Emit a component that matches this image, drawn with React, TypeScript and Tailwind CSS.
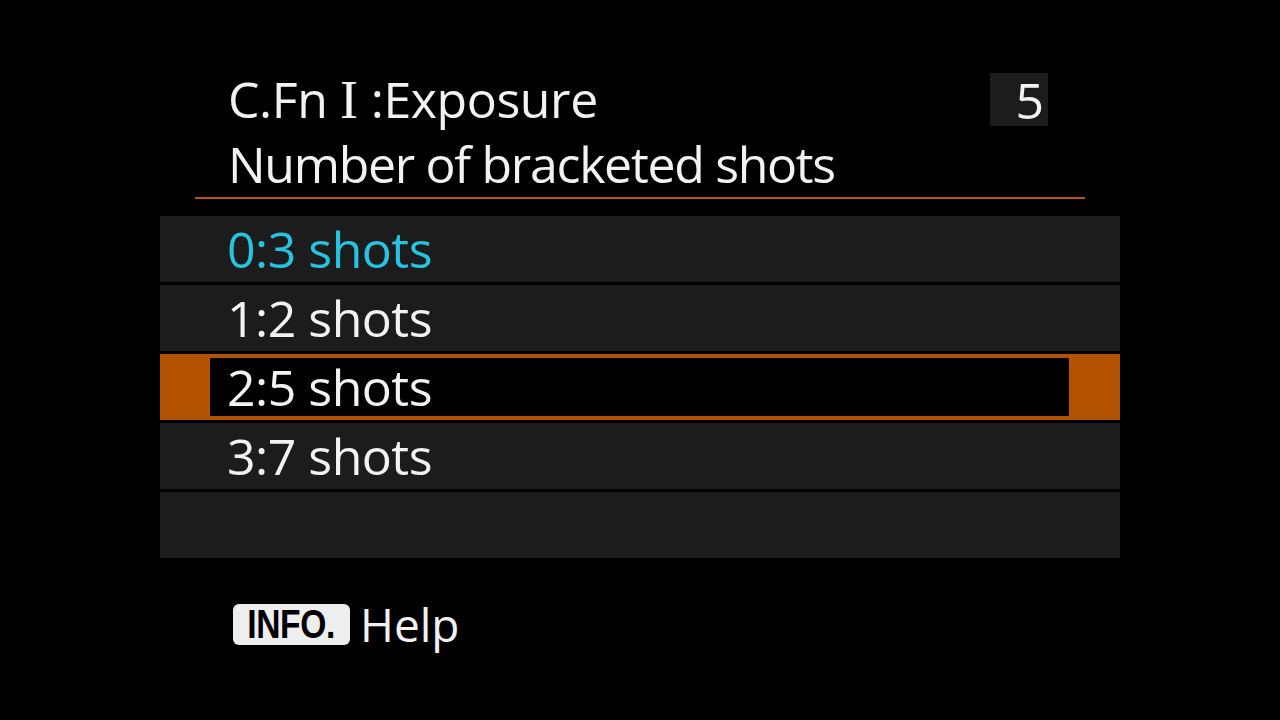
import React from 'react';

const options = [
  { label: '0:3 shots', current: true },
  { label: '1:2 shots' },
  { label: '2:5 shots', selected: true },
  { label: '3:7 shots' },
  { label: '' },
];

const font = { fontFamily: '"Open Sans", "Noto Sans", sans-serif' };

const App: React.FC = () => {
  return (
    <div className="w-[1280px] h-[720px] bg-black pt-[67px] text-[#f2f2f2]" style={font}>
      <div className="mx-auto w-[960px]">
        {/* Header */}
        <div className="mx-[35px] border-b-2 border-[#b9521c]">
          <div className="flex justify-between">
            <div className="pl-[33px] text-[50px] leading-[65px]">
              <div className="tracking-[-0.4px]">
                C.Fn{' '}
                <span className="font-['Liberation_Serif'] text-[54px] leading-none tracking-normal">I</span>{' '}
                :Exposure
              </div>
              <div className="tracking-[-1.3px]">Number of bracketed shots</div>
            </div>
            <div className="mt-[6px] mr-[37px] h-[53px] w-[58px] bg-[#1c1c1c] flex items-center justify-end pr-[4px] text-[50px] leading-none">
              5
            </div>
          </div>
        </div>

        {/* Options */}
        <div className="mt-[17px] flex flex-col gap-[3px]">
          {options.map((o, i) =>
            o.selected ? (
              <div key={i} className="h-[66px] bg-[#b35200] flex items-center pl-[50px] pr-[51px]">
                <div className="h-[58px] flex-1 bg-black pl-[17px] text-[50px] leading-[58px] tracking-[-0.5px]">
                  {o.label}
                </div>
              </div>
            ) : (
              <div
                key={i}
                className={`h-[66px] bg-[#1c1c1c] pl-[67px] text-[50px] leading-[66px] tracking-[-0.5px] ${
                  o.current ? 'text-[#27c3e0]' : ''
                }`}
              >
                {o.label}
              </div>
            )
          )}
        </div>

        {/* Footer */}
        <div className="mt-[43px] pl-[73px] flex items-center gap-[10px]">
          <div className="h-[41px] w-[117px] rounded-[6px] bg-[#eeeeee] flex items-center justify-center">
            <span
              className="text-black font-bold text-[40px] leading-[41px] scale-x-[0.84] inline-block tracking-[-0.5px]"
              style={{ fontFamily: '"Liberation Sans", Arial, sans-serif' }}
            >
              INFO.
            </span>
          </div>
          <span className="text-[46px] leading-none">Help</span>
        </div>
      </div>
    </div>
  );
};

export default App;
